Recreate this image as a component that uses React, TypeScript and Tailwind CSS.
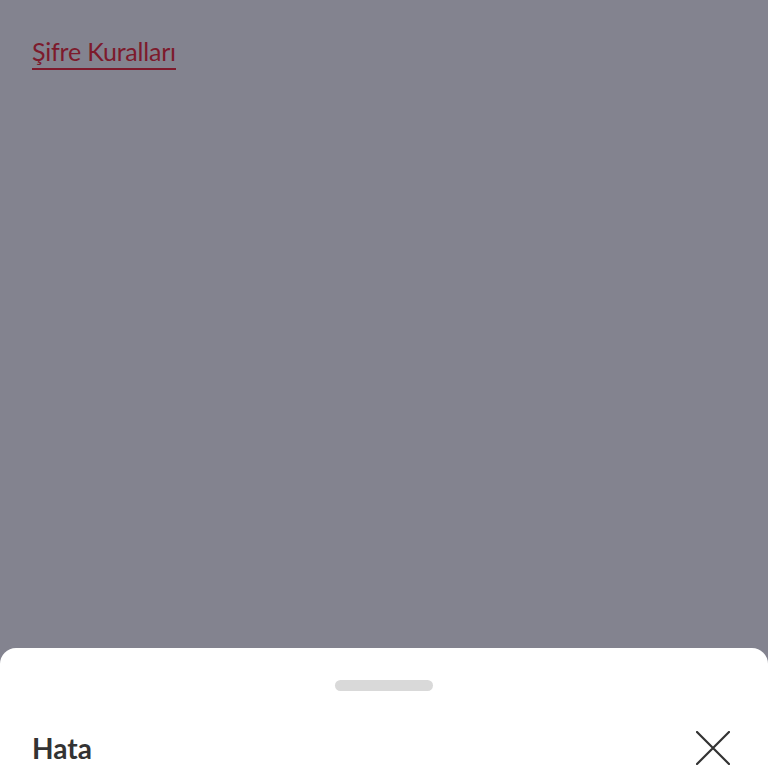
export default function App() {
  return (
    <div className="relative w-[768px] h-[768px] overflow-hidden bg-[#83838f]" style={{ fontFamily: "Lato, 'Noto Sans', sans-serif" }}>
      <div className="pt-[37px] pl-[32px]">
        <span className="inline-block text-[25px] leading-[29px] text-[#7d1a2c] border-b-2 border-[#7d1a2c] pb-[2px] tracking-[-0.2px]">Şifre Kuralları</span>
      </div>
      <div className="absolute left-0 right-0 top-[648px] h-[140px] bg-white rounded-t-[16px]">
        <div className="flex justify-center pt-[32px]">
          <div className="w-[98px] h-[11px] rounded-full bg-[#d9d9d9]" />
        </div>
        <div className="flex items-center justify-between pl-[32px] pr-[38px] pt-[40px]">
          <span className="text-[28px] font-bold text-[#333333] leading-[32px]">Hata</span>
          <svg width="34" height="34" viewBox="0 0 34 34" className="block">
            <path d="M1 1 L33 33 M33 1 L1 33" stroke="#333" strokeWidth="2.2" strokeLinecap="round" />
          </svg>
        </div>
      </div>
    </div>
  );
}
